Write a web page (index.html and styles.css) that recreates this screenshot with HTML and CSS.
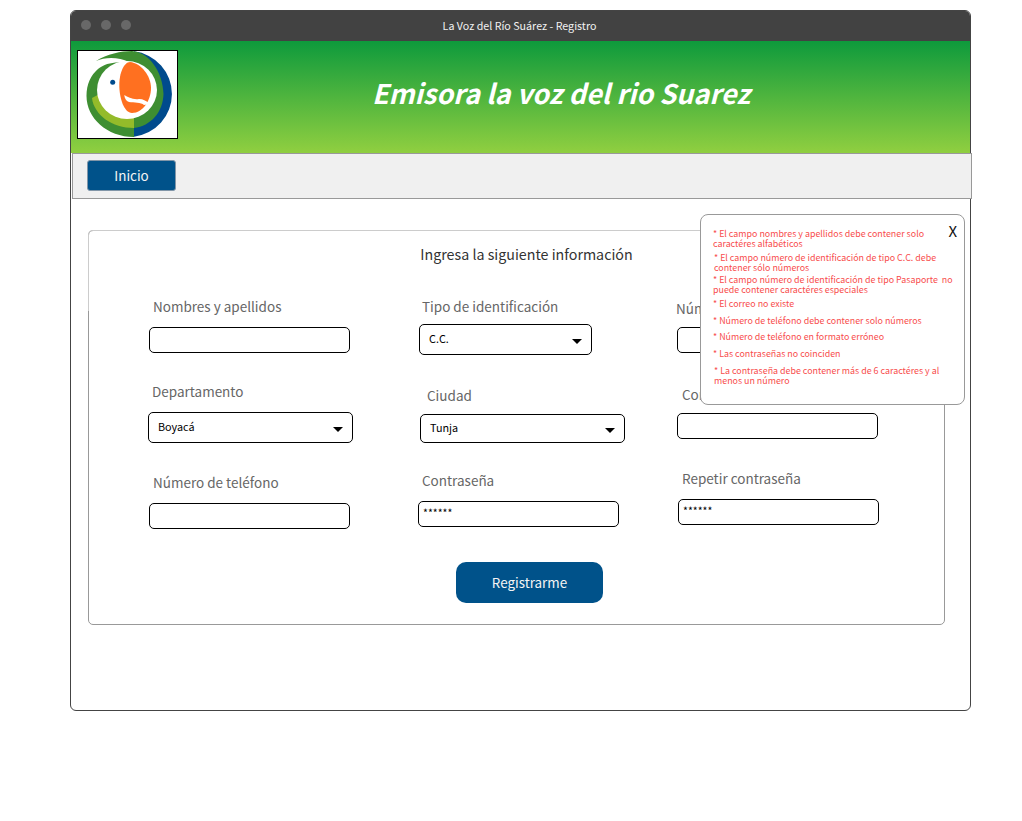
FILE: index.html
```html
<!DOCTYPE html>
<html lang="es">
<head>
<meta charset="utf-8">
<title>La Voz del Río Suárez - Registro</title>
<link rel="stylesheet" href="styles.css">
</head>
<body>
<div class="window">
  <div class="titlebar">
    <div class="dots"><span class="dot"></span><span class="dot"></span><span class="dot"></span></div>
    <span class="titlebar-text">La Voz del Río Suárez - Registro</span>
  </div>
  <header class="banner">
    <div class="logo">
      <svg width="99" height="87" viewBox="1 1 99 87">
        <path fill="#004b8d" d="M57 1.3A43 43 0 0 1 57 86.7Z"/>
        <path fill="#3e8e32" d="M19 11C30 4 44 1 55 1C72 2 86 22 86.5 44C86 62 74 76 57 78L57 87C30 87 9.500 68 9.500 46C9.500 34 14 25 21 19C27 14 35 12 44 12.500L52 12C42 7 28 7 19 11Z"/>
        <path fill="#94bb2a" d="M15 48C17 65 35 78 57 78L57 60L30 40Z"/>
        <ellipse fill="#fff" cx="50" cy="40" rx="30" ry="29"/>
        <path fill="#ff7020" d="M53 12C64 13 74 26 74 38C74 50 66 63 55 63C47 63 42.300 48 42.300 35C42.300 23 47 12 53 12Z"/>
        <path fill="#fff" d="M47.300 45C51 47 56 50 62 49C66 49 70 51 73 54L67 55C64 52 57 53 52 52C49 51 47.500 48 47.300 45Z"/>
        <circle fill="#004b8d" cx="35.700" cy="32.300" r="2.500"/>
      </svg>
    </div>
    <h1 class="banner-title">Emisora la voz del rio Suarez</h1>
  </header>
  <nav class="navbar"><a class="nav-btn">Inicio</a></nav>
  <main class="card">
    <h2 class="card-title">Ingresa la siguiente información</h2>
    <div class="form-grid">
      <div class="field f-name"><label class="lbl">Nombres y apellidos</label><div class="ctl"></div></div>
      <div class="field f-type"><label class="lbl">Tipo de identificación</label><div class="ctl sel sel-type">C.C.<i class="caret"></i></div></div>
      <div class="field f-num"><label class="lbl">Número de identificación</label><div class="ctl"></div></div>
      <div class="field f-dep"><label class="lbl">Departamento</label><div class="ctl sel sel-wide">Boyacá<i class="caret"></i></div></div>
      <div class="field f-city"><label class="lbl">Ciudad</label><div class="ctl sel sel-wide sel-short">Tunja<i class="caret"></i></div></div>
      <div class="field f-mail"><label class="lbl">Correo electrónico</label><div class="ctl"></div></div>
      <div class="field f-tel"><label class="lbl">Número de teléfono</label><div class="ctl"></div></div>
      <div class="field f-pass"><label class="lbl">Contraseña</label><div class="ctl pw">******</div></div>
      <div class="field f-rep"><label class="lbl">Repetir contraseña</label><div class="ctl pw">******</div></div>
    </div>
    <button class="submit" type="button">Registrarme</button>
  </main>
  <aside class="errors">
    <span class="close">X</span>
    <p class="err e1">* El campo nombres y apellidos debe contener solo<br>caractéres alfabéticos</p>
    <p class="err e2">* El campo número de identificación de tipo C.C. debe<br>contener sólo números</p>
    <p class="err e3">* El campo número de identificación de tipo Pasaporte&nbsp; no<br>puede contener caractéres especiales</p>
    <p class="err e4">* El correo no existe</p>
    <p class="err e5">* Número de teléfono debe contener solo números</p>
    <p class="err e6">* Número de teléfono en formato erróneo</p>
    <p class="err e7">* Las contraseñas no coinciden</p>
    <p class="err e8">* La contraseña debe contener más de 6 caractéres y al<br>menos un número</p>
  </aside>
</div>
</body>
</html>
```
FILE: styles.css
```css
* { box-sizing: border-box; }
html, body { margin: 0; padding: 0; background: #fff; }
body { font-family: "Noto Sans CJK SC", "Noto Sans", sans-serif; }

.window {
  position: relative;
  width: 901px;
  height: 701px;
  margin: 10px 0 0 70px;
  border: 1px solid #444;
  border-radius: 6px;
  background: #fff;
}

.titlebar {
  position: relative;
  height: 30px;
  background: #424242;
  border-radius: 5px 5px 0 0;
  display: flex;
  align-items: center;
  justify-content: center;
}
.dots {
  position: absolute;
  left: 10px;
  top: 9px;
  display: flex;
  gap: 10px;
}
.dot { width: 10px; height: 10px; border-radius: 50%; background: #686868; }
.titlebar-text { font-size: 10.7px; line-height: 30px; color: #f2f2f2; margin-left: -2px; }

.banner {
  height: 112px;
  display: flex;
  align-items: flex-start;
  background: linear-gradient(#0e9a3c, #90cf40);
}
.logo {
  width: 101px;
  height: 89px;
  margin: 9px 0 0 6px;
  background: #fff;
  border: 1px solid #000;
  flex: none;
}
.logo svg { display: block; }
.banner-title {
  flex: 1;
  margin: 0;
  padding-right: 26px;
  text-align: center;
  color: #fff;
  font-size: 27px;
  line-height: 103px;
  font-weight: 700;
  font-style: italic;
}

.navbar {
  width: calc(100% + 1px);
  height: 46px;
  margin-left: 1px;
  padding: 6px 0 0 14px;
  background: #f0f0f0;
  border: 1px solid #999;
}
.nav-btn {
  display: block;
  width: 89px;
  height: 31px;
  background: #00528a;
  border: 1px solid #8296a8;
  border-radius: 3px;
  color: #f4f4f4;
  font-size: 13.4px;
  line-height: 29px;
  text-align: center;
}

.card {
  position: relative;
  width: 857px;
  height: 395px;
  margin: 31px 0 0 17px;
  border: 1px solid #999;
  border-radius: 5px;
}
.card::before {
  content: "";
  position: absolute;
  left: -1px;
  top: -1px;
  right: -1px;
  height: 80px;
  border-left: 1px solid #ccc;
  border-top: 1px solid #ccc;
  border-top-left-radius: 5px;
}
.card-title {
  margin: 13px 0 0;
  padding-left: 20px;
  text-align: center;
  font-size: 14.25px;
  font-weight: 400;
  line-height: 20px;
  color: #333;
}

.form-grid {
  display: grid;
  grid-template-columns: 270px 258px 201px;
  grid-template-rows: 85px 87px 93px;
  margin: 33px 0 0 59px;
}
.lbl {
  display: block;
  height: 20px;
  font-size: 13.5px;
  line-height: 18px;
  color: #666;
  white-space: nowrap;
}
.ctl {
  width: 201px;
  height: 26px;
  background: #fff;
  border: 1px solid #000;
  border-radius: 5px;
  font-size: 10.8px;
  color: #000;
}
.sel {
  display: flex;
  align-items: center;
  justify-content: space-between;
  padding: 0 9px 4px 9px;
  height: 31px;
}
.sel-type { width: 173px; }
.sel-wide { width: 205px; }
.sel-short { height: 29px; }
.caret {
  width: 0;
  height: 0;
  margin-top: 8px;
  border-left: 5px solid transparent;
  border-right: 5px solid transparent;
  border-top: 5px solid #000;
}
.pw { padding-left: 4px; font-size: 10.5px; line-height: 21px; }

.f-name .lbl { margin: 0 0 10px 5px; }
.f-name .ctl { margin-left: 1px; }
.f-type .lbl { margin: 0 0 7px 4px; }
.f-type .ctl { margin-left: 1px; }
.f-num { margin-top: 2px; }
.f-num .lbl { margin: 0 0 8px 0; }
.f-num .ctl { margin-left: 1px; }
.f-dep .lbl { margin: 0 0 10px 4px; }
.f-city { margin-top: 4px; }
.f-city .lbl { margin: 0 0 8px 9px; }
.f-city .ctl { margin-left: 2px; }
.f-mail { margin-top: 3px; }
.f-mail .lbl { margin: 0 0 8px 6px; }
.f-mail .ctl { margin-left: 1px; }
.f-tel { margin-top: 4px; }
.f-tel .lbl { margin: 0 0 10px 5px; }
.f-tel .ctl { margin-left: 1px; }
.f-pass { margin-top: 2px; }
.f-pass .lbl { margin: 0 0 10px 4px; }
.f-rep .lbl { margin: 0 0 10px 6px; }
.f-rep .ctl { margin-left: 2px; }

.submit {
  display: block;
  width: 147px;
  height: 41px;
  margin-left: 367px;
  padding: 0;
  background: #00528a;
  border: 0;
  border-radius: 10px;
  color: #f4f4f4;
  font: 400 13.4px/41px "Noto Sans CJK SC", "Noto Sans", sans-serif;
}

.errors {
  position: absolute;
  left: 629px;
  top: 203px;
  width: 265px;
  height: 191px;
  padding: 14px 0 0 12px;
  background: #fff;
  border: 1px solid #999;
  border-radius: 8px;
  color: #f84c4c;
}
.close {
  position: absolute;
  right: 7px;
  top: 6px;
  font-size: 15px;
  line-height: 20px;
  color: #111;
}
.err { margin: 0; font-size: 8.9px; line-height: 10px; white-space: nowrap; }
.e2 { margin: 4px 0 0 1px; }
.e3 { margin-top: 2px; }
.e4 { margin-top: 4px; }
.e5 { margin-top: 7px; }
.e6 { margin-top: 6px; }
.e7 { margin-top: 7px; }
.e8 { margin: 7px 0 0 1px; }
```
